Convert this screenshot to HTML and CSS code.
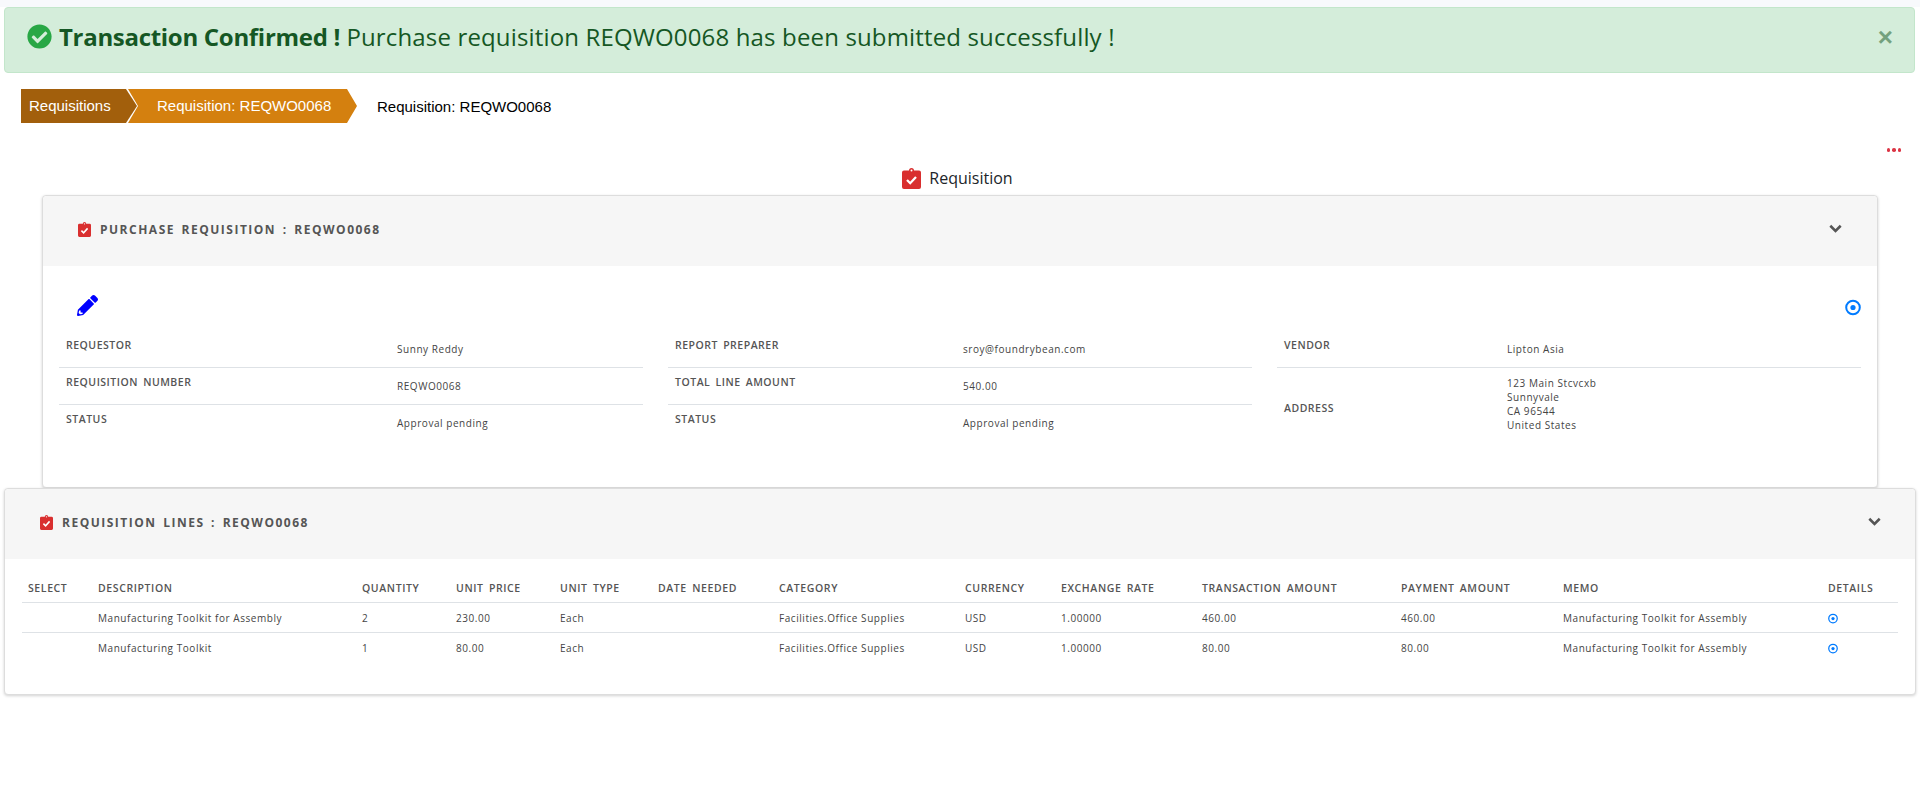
FILE: index.html
```html
<!DOCTYPE html>
<html>
<head>
<meta charset="utf-8">
<title>Requisition: REQWO0068</title>
<link rel="stylesheet" href="styles.css">
</head>
<body>
<svg class="defs" width="0" height="0">
  <symbol id="clip" viewBox="0 0 19 21" preserveAspectRatio="none"><path d="M2 2.5h5a2.5 2.5 0 0 1 5 0h5a2 2 0 0 1 2 2V19a2 2 0 0 1-2 2H2a2 2 0 0 1-2-2V4.5a2 2 0 0 1 2-2z" fill="#d92f2f"/><circle cx="9.5" cy="2.6" r="1" fill="#fff"/><path d="M5 12l3.2 3.2L14 9" fill="none" stroke="#fff" stroke-width="2.3"/></symbol>
  <symbol id="chev" viewBox="0 0 12 8"><path d="M1.2 1.5L6 6.2l4.8-4.7" fill="none" stroke="currentColor" stroke-width="2.4"/></symbol>
  <symbol id="target" viewBox="0 0 16 16"><circle cx="8" cy="8" r="6.8" fill="none" stroke="currentColor" stroke-width="2"/><circle cx="8" cy="8" r="2.6" fill="currentColor"/></symbol>
</svg>

<div class="topstrip"></div>

<div class="alert">
  <svg class="alert-icon" viewBox="0 0 512 512"><path d="M504 256c0 136.967-111.033 248-248 248S8 392.967 8 256 119.033 8 256 8s248 111.033 248 248zM227.314 387.314l184-184c6.248-6.248 6.248-16.379 0-22.627l-22.627-22.627c-6.248-6.249-16.379-6.249-22.628 0L216 308.118l-70.059-70.059c-6.248-6.248-16.379-6.248-22.628 0l-22.627 22.627c-6.248 6.248-6.248 16.379 0 22.627l104 104c6.249 6.249 16.379 6.249 22.628 0z"/></svg>
  <div class="alert-text"><strong>Transaction Confirmed !</strong> Purchase requisition REQWO0068 has been submitted successfully !</div>
  <span class="alert-close">×</span>
</div>

<div class="crumbs">
  <a class="crumb crumb-first">Requisitions</a>
  <a class="crumb crumb-second">Requisition: REQWO0068</a>
  <span class="crumb-current">Requisition: REQWO0068</span>
</div>

<div class="more"><i></i><i></i><i></i></div>

<div class="page-title">
  <svg class="page-title-icon"><use href="#clip"/></svg>
  <span>Requisition</span>
</div>

<section class="card card-header-info">
  <header class="card-head">
    <svg class="head-icon"><use href="#clip"/></svg>
    <h3>PURCHASE REQUISITION : REQWO0068</h3>
    <svg class="chev"><use href="#chev"/></svg>
  </header>
  <div class="card-body">
    <div class="tools">
      <svg class="pencil" viewBox="0 0 512 512"><path d="M497.9 142.1l-46.1 46.1c-4.7 4.7-12.3 4.7-17 0l-111-111c-4.7-4.7-4.7-12.3 0-17l46.1-46.1c18.7-18.7 49.1-18.7 67.9 0l60.1 60.1c18.8 18.7 18.8 49.1 0 67.9zM284.2 99.8L21.6 362.4.4 483.9c-2.9 16.4 11.4 30.6 27.8 27.8l121.5-21.3 262.6-262.6c4.7-4.7 4.7-12.3 0-17l-111-111c-4.8-4.7-12.4-4.7-17.1 0zM88 424h48v36.3l-64.5 11.3-31.1-31.1L51.7 376H88v48z"/></svg>
      <svg class="target"><use href="#target"/></svg>
    </div>
    <div class="info">
      <div class="info-col col-a">
        <div class="info-row"><label>REQUESTOR</label><span>Sunny Reddy</span></div>
        <div class="info-row"><label>REQUISITION NUMBER</label><span>REQWO0068</span></div>
        <div class="info-row"><label>STATUS</label><span>Approval pending</span></div>
      </div>
      <div class="info-col col-b">
        <div class="info-row"><label>REPORT PREPARER</label><span>sroy@foundrybean.com</span></div>
        <div class="info-row"><label>TOTAL LINE AMOUNT</label><span>540.00</span></div>
        <div class="info-row"><label>STATUS</label><span>Approval pending</span></div>
      </div>
      <div class="info-col col-c">
        <div class="info-row"><label>VENDOR</label><span>Lipton Asia</span></div>
        <div class="info-row info-address"><label>ADDRESS</label><span>123 Main Stcvcxb<br>Sunnyvale<br>CA 96544<br>United States</span></div>
      </div>
    </div>
  </div>
</section>

<section class="card card-lines">
  <header class="card-head">
    <svg class="head-icon"><use href="#clip"/></svg>
    <h3>REQUISITION LINES : REQWO0068</h3>
    <svg class="chev"><use href="#chev"/></svg>
  </header>
  <div class="lines-body">
    <table class="lines">
      <colgroup>
        <col class="c-select"><col class="c-desc"><col class="c-qty"><col class="c-price"><col class="c-type"><col class="c-date"><col class="c-cat"><col class="c-cur"><col class="c-rate"><col class="c-trans"><col class="c-pay"><col class="c-memo"><col class="c-det">
      </colgroup>
      <thead>
        <tr><th>SELECT</th><th>DESCRIPTION</th><th>QUANTITY</th><th>UNIT PRICE</th><th>UNIT TYPE</th><th>DATE NEEDED</th><th>CATEGORY</th><th>CURRENCY</th><th>EXCHANGE RATE</th><th>TRANSACTION AMOUNT</th><th>PAYMENT AMOUNT</th><th>MEMO</th><th>DETAILS</th></tr>
      </thead>
      <tbody>
        <tr><td></td><td>Manufacturing Toolkit for Assembly</td><td>2</td><td>230.00</td><td>Each</td><td></td><td>Facilities.Office Supplies</td><td>USD</td><td>1.00000</td><td>460.00</td><td>460.00</td><td>Manufacturing Toolkit for Assembly</td><td><svg class="detail"><use href="#target"/></svg></td></tr>
        <tr><td></td><td>Manufacturing Toolkit</td><td>1</td><td>80.00</td><td>Each</td><td></td><td>Facilities.Office Supplies</td><td>USD</td><td>1.00000</td><td>80.00</td><td>80.00</td><td>Manufacturing Toolkit for Assembly</td><td><svg class="detail"><use href="#target"/></svg></td></tr>
      </tbody>
    </table>
  </div>
</section>
</body>
</html>
```

FILE: styles.css
```css
* {box-sizing: border-box;}
html, body {margin: 0; padding: 0; background: #fff;}
body {font-family: "Open Sans", "Noto Sans", sans-serif; color: #212529; font-size: 10px; height: 793px; overflow: hidden;}
.defs {display: block; height: 0;}
.topstrip {height: 7px; background: #f8f9fc;}

.alert {display: flex; align-items: center; height: 66px; margin: 0 5px 0 4px; padding: 0 0 0 22px; background: #d4edda; border: 1px solid #c3e6cb; border-radius: 4px; color: #155724;}
.alert-icon {width: 25px; height: 25px; fill: #28a745; margin-top: -8px; flex: none;}
.alert-text {font-size: 24px; line-height: 32px; margin: -7px 0 0 7px; flex: 1; white-space: nowrap; letter-spacing: .15px;}
.alert-text strong {font-weight: 700; letter-spacing: -.3px;}
.alert-close {font-size: 26px; line-height: 26px; margin: -6px 21px 0 0; color: #155724; opacity: .5; font-weight: 700; font-family: "Liberation Sans", sans-serif;}

.crumbs {display: flex; align-items: center; height: 34px; margin: 16px 0 0 21px; font-family: "Liberation Sans", Arial, sans-serif; font-size: 15px;}
.crumb {display: block; height: 34px; line-height: 34px; color: #fff;}
.crumb-first {width: 116px; padding-left: 8px; background: #a25f0c; clip-path: polygon(0 0, 105px 0, 116px 50%, 105px 100%, 0 100%);}
.crumb-second {width: 230px; margin-left: -9px; padding-left: 29px; background: #d4800f; clip-path: polygon(0 0, 219px 0, 229px 50%, 219px 100%, 0 100%, 10px 50%);}
.crumb-current {margin-left: 19px; color: #000;}

.more {display: flex; justify-content: flex-end; gap: 2px; margin: 25px 19px 0 0; height: 4px;}
.more i {display: block; width: 3.5px; height: 3.5px; border-radius: 50%; background: #dc3545;}

.page-title {display: flex; justify-content: center; align-items: center; gap: 8px; height: 21px; margin-top: 16px; padding-right: 5px; font-size: 16px; line-height: 21px;}
.page-title-icon {width: 19px; height: 21px;}

.card {background: #fff; border: 1px solid #ddd; border-radius: 4px; box-shadow: 0 1px 3px rgba(0,0,0,.18);}
.card-header-info {margin: 6px 42px 0 42px; height: 293px;}
.card-lines {margin: 0 4px; height: 207px;}
.card-head {display: flex; align-items: center; height: 70px; padding-bottom: 3px; background: #f6f6f6; border-radius: 4px 4px 0 0;}
.card-header-info .card-head {padding-left: 35px; padding-right: 35px;}
.card-lines .card-head {padding-left: 35px; padding-right: 34px;}
.card-head h3 {flex: 1; margin: 0 0 0 9px; font-size: 12px; font-weight: 700; letter-spacing: 1.5px; word-spacing: 2px; color: #555;}
.head-icon {width: 13px; height: 15px;}
.chev {width: 13px; height: 9px; color: #555; margin-top: -2px;}

.tools {display: flex; justify-content: space-between; align-items: flex-start; padding: 16px 16px 0 34px; height: 65px;}
.pencil {width: 21px; height: 21px; fill: #0000ff; margin-top: 13px;}
.target {width: 16px; height: 17px; color: #007bff; margin-top: 17px;}

.info {display: grid; grid-template-columns: repeat(3, 584px); column-gap: 25px; padding-left: 16px;}
.info-row {display: grid; min-height: 37px; padding-left: 7px; border-bottom: 1px solid #dee2e6;}
.info-row:last-child {border-bottom: 0;}
.col-a .info-row {grid-template-columns: 331px 1fr;}
.col-b .info-row {grid-template-columns: 288px 1fr;}
.col-c .info-row {grid-template-columns: 223px 1fr;}
.info-row label {padding-top: 7px; font-size: 10.5px; line-height: 15px; font-weight: 600; letter-spacing: .5px; word-spacing: 2px; color: #555;}
.info-row span {padding-top: 11px; font-size: 10px; line-height: 15px; letter-spacing: .55px; color: #444;}
.info-address label {padding-top: 33px;}
.info-address span {padding-top: 8px; line-height: 14px;}

.lines-body {padding: 19px 17px 0 17px;}
.lines {width: 1876px; table-layout: fixed; border-collapse: collapse;}
.lines th, .lines td {padding: 0 0 0 6px; text-align: left; white-space: nowrap; border-bottom: 1px solid #dee2e6;}
.lines tbody tr:last-child td {border-bottom: 0;}
.lines th {height: 24px; padding-bottom: 4px; font-size: 10.5px; font-weight: 600; letter-spacing: .6px; word-spacing: 2px; color: #555;}
.lines td {height: 30px; padding-top: 2px; font-size: 10px; letter-spacing: .55px; color: #444;}
.detail {display: block; width: 10px; height: 11px; color: #007bff;}
.c-select {width: 70px;} .c-desc {width: 264px;} .c-qty {width: 94px;} .c-price {width: 104px;} .c-type {width: 98px;} .c-date {width: 121px;} .c-cat {width: 186px;} .c-cur {width: 96px;} .c-rate {width: 141px;} .c-trans {width: 199px;} .c-pay {width: 162px;} .c-memo {width: 265px;} .c-det {width: 76px;}
```
